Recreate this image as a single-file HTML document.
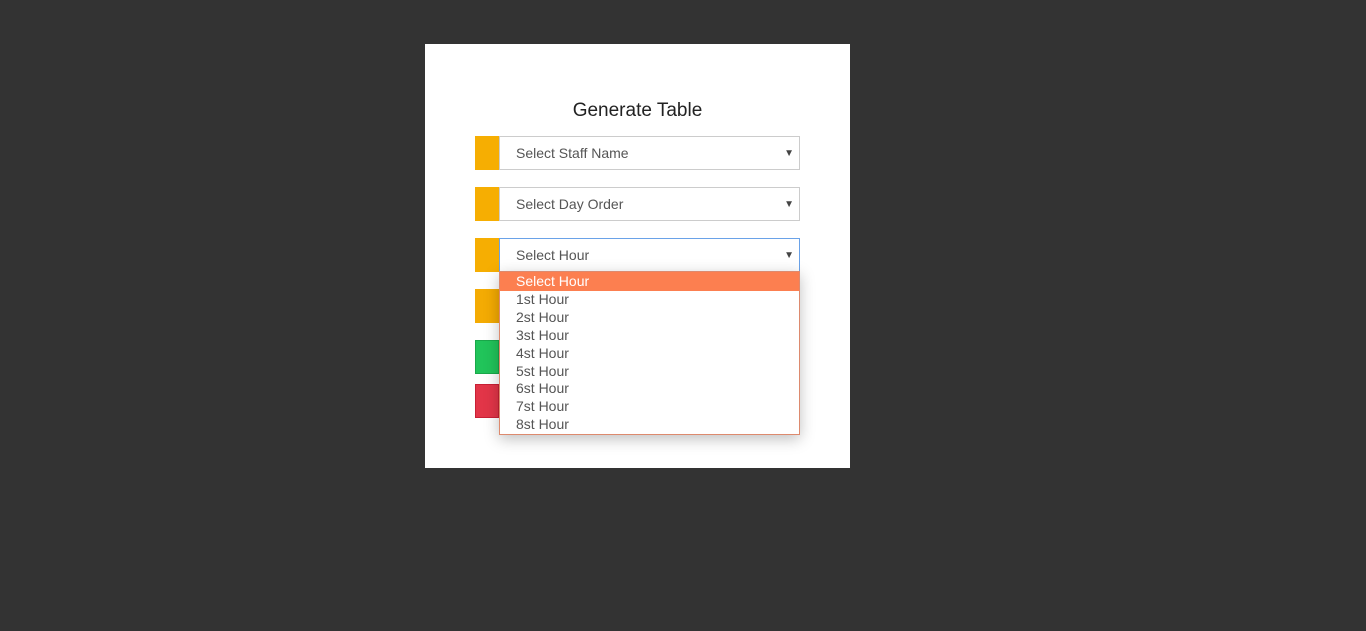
<!DOCTYPE html><html><head><style>
body{margin:0;width:1366px;height:631px;background:#333;font-family:"Liberation Sans",sans-serif;position:relative;overflow:hidden}
.a{position:absolute}
.card{left:425px;top:44px;width:425px;height:424px;background:#fff}
.t{left:425px;width:425px;top:100px;text-align:center;font-size:19px;color:#222}
.blk{left:475px;width:24px;height:34px}
.sel{left:499px;width:299px;height:32px;border:1px solid #ccc;background:#fff;font-size:14px;color:#555;line-height:32px;box-sizing:content-box}
.sel span{position:absolute;left:16px}
.sel i{position:absolute;right:5px;top:1px;font-style:normal;font-size:10px;color:#444}
.dd{left:499px;top:271px;width:299px;height:162px;border:1px solid #dd8a6e;background:#fff;box-shadow:0 4px 14px rgba(0,0,0,.25);font-size:14px;color:#555}
.dd div{height:17.9px;line-height:17.9px;padding-left:16px}
.dd .h{background:#fc7f50;color:#fff;height:19px;line-height:19px}
</style></head><body>
<div class="a card"></div>
<div class="a t">Generate Table</div>
<div class="a blk" style="top:136px;background:#f6ae02"></div>
<div class="a sel" style="top:136px"><span>Select Staff Name</span><i>▼</i></div>
<div class="a blk" style="top:187px;background:#f6ae02"></div>
<div class="a sel" style="top:187px"><span>Select Day Order</span><i>▼</i></div>
<div class="a blk" style="top:238px;background:#f6ae02"></div>
<div class="a sel" style="top:238px;border-color:#6aa2e8"><span>Select Hour</span><i>▼</i></div>
<div class="a blk" style="top:289px;background:#f4ab03"></div>
<div class="a blk" style="top:340px;background:#21c45a;border:1px solid #1aa84a;box-sizing:border-box"></div>
<div class="a blk" style="top:384px;background:#e23548;border:1px solid #c82035;box-sizing:border-box"></div>
<div class="a dd"><div class="h">Select Hour</div><div>1st Hour</div><div>2st Hour</div><div>3st Hour</div><div>4st Hour</div><div>5st Hour</div><div>6st Hour</div><div>7st Hour</div><div>8st Hour</div></div>
</body></html>
